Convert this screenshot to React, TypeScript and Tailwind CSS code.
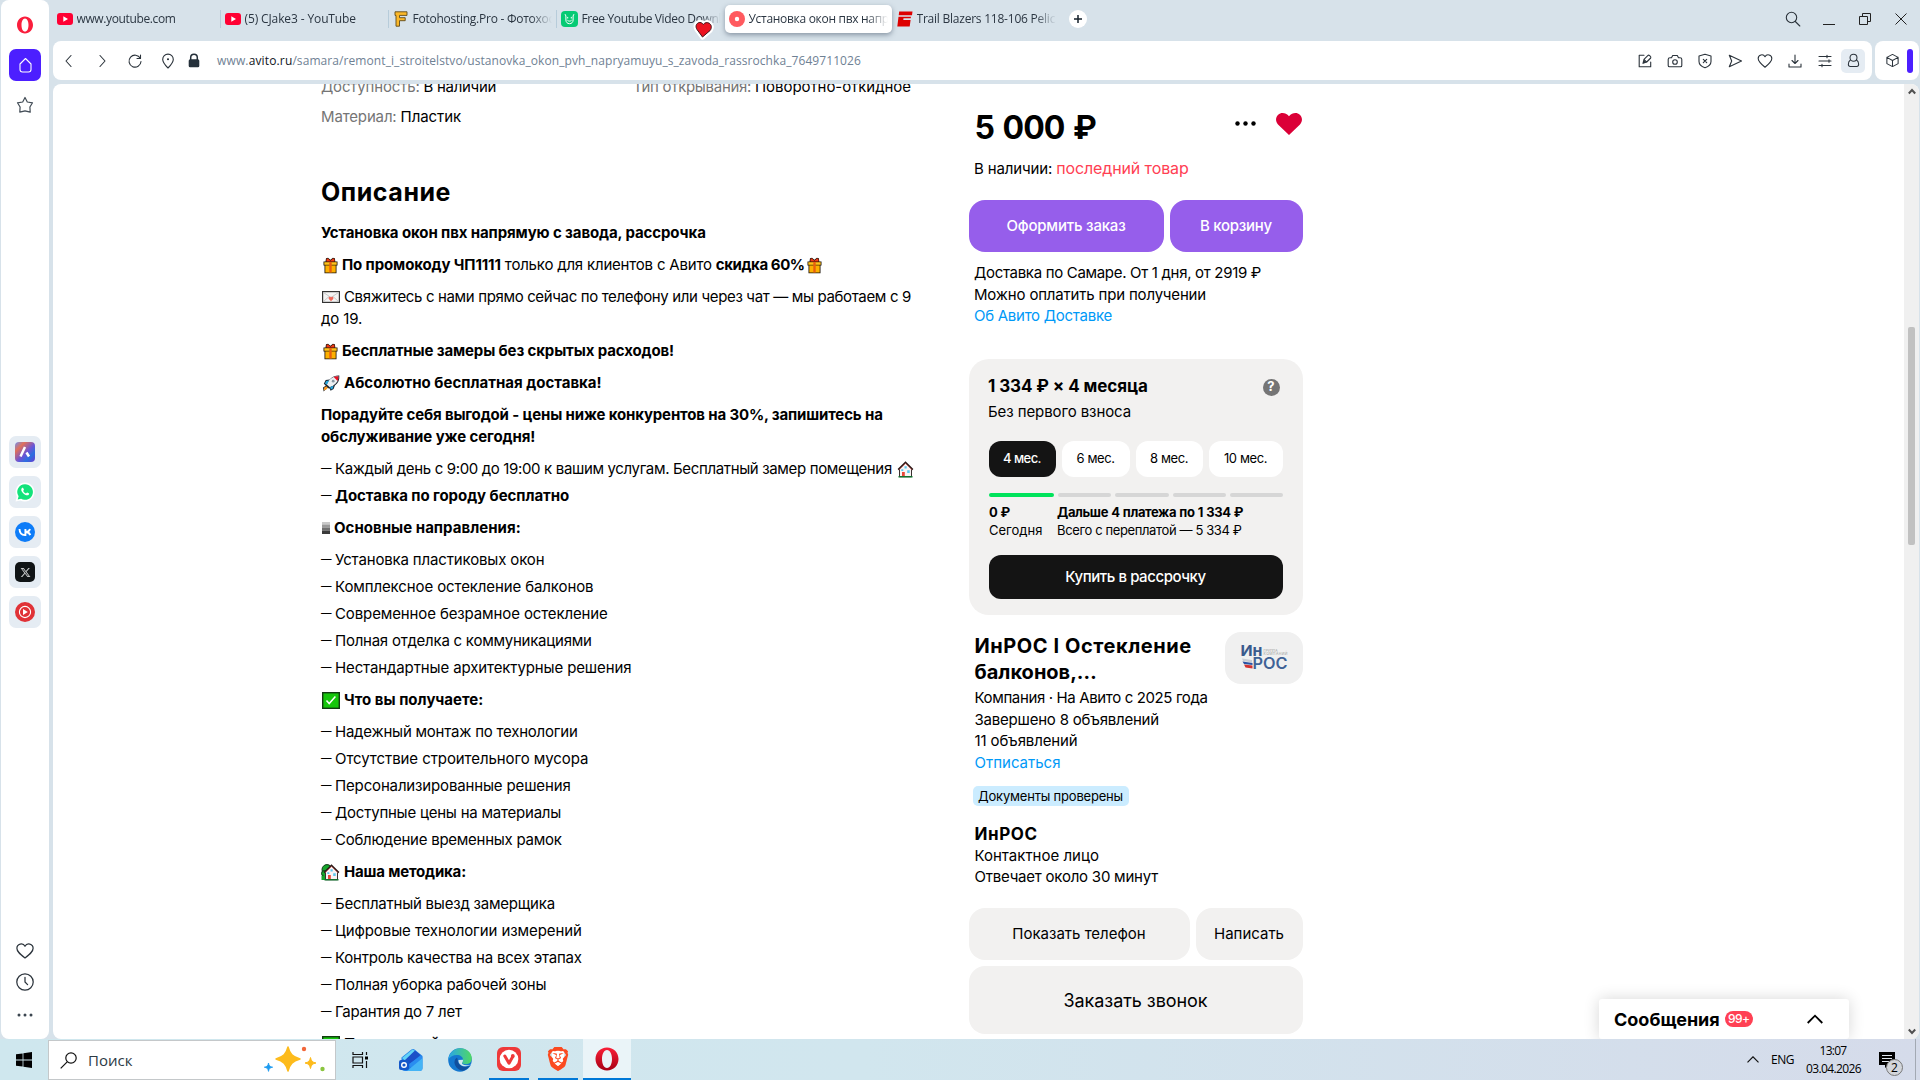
import React from 'react';
import { FaXTwitter } from 'react-icons/fa6';
import { SiBrave } from 'react-icons/si';

type IconProps = { className?: string };

/* ---------- emoji ---------- */

const GiftEmoji = () => (
  <svg className="ml-[2px] mr-[4px] h-[17px] w-[15px] shrink-0" viewBox="0 0 15 17">
    <path d="M3 1.200 5 .7l2.400 2 2.500-2 2 .5.4 3.300H14.500v4h-1V16.300h-12V8.500h-1v-4h2z" fill="#1c1208" />
    <path d="M1.300 5.200h12.400v2.600H1.300z" fill="#ffc21a" />
    <path d="M2.300 8.400h10.400v7.100H2.300z" fill="#fdb000" />
    <path d="M6.300 5h2.400v10.500H6.300z" fill="#e8600f" />
    <path d="M3.600 1.700 5 1.500l2.400 2.200L10 1.500l1.300.3.3 2.700H3.400z" fill="#f03a17" />
  </svg>
);

const EnvelopeEmoji = () => (
  <svg className="ml-px mr-[4px] h-[12px] w-[18px] shrink-0" viewBox="0 0 18 12">
    <rect x=".6" y=".6" width="16.8" height="10.800" fill="#f4f4f4" stroke="#333" strokeWidth="1.200" />
    <path d="m1.500 1.500 7.500 5 7.500-5M1.500 10.500l5.500-5M16.500 10.500 11 5.500" fill="none" stroke="#c8c8c8" />
    <path d="M9 10.300 6.800 7.900a1.400 1.400 0 0 1 2.200-1.700 1.400 1.400 0 0 1 2.200 1.700z" fill="#ee6a5c" />
  </svg>
);

const RocketEmoji = () => (
  <svg className="ml-px mr-[4px] h-[17px] w-[18px] shrink-0" viewBox="0 0 18 17">
    <path d="M17.300.4c.4 4.200-1 7.600-4.400 10.200L11.600 14l-3 1.800-1-2.400-2.300-.3-3.700 3.400L1 12.600l2.800-1.900-2-2 1.900-3.600 4-.6C10.300 1.500 13.500.2 17.300.4z" fill="#1b2430" />
    <path d="M16.400 1.300c.1 3.800-1.600 7-4.800 9l-3.800 2-3-2.800 1.800-3.800C9.200 2.600 12.600 1.300 16.400 1.300z" fill="#eceff2" />
    <path d="M16.400 1.300c-1.700-.1-3.300.2-4.700.8l3.900 3.800c.6-1.400.9-3 .8-4.600z" fill="#e81224" />
    <path d="M7.200 5.500 4.200 6 2.900 8.500l1.900 1.300zM11.500 10.700l-.7 2.700-1.900 1.100-.8-2.500z" fill="#2aa7de" />
    <circle cx="11.200" cy="6.200" r="1.400" fill="#8795a1" />
    <path d="m1.800 15.500.4-3 2.100-1.200 1.500 1.400-1.500 1.700z" fill="#ff9a1f" />
  </svg>
);

const HouseShape = () => (
  <>
    <path d="M8.500 1.500 14.500 7.500v8.200h-12V7.500z" fill="#f8f4f4" stroke="#3a3030" strokeWidth="1" />
    <path d="M1.200 8.700 8.500 1.500l7.300 7.200" fill="none" stroke="#2b1a18" strokeWidth="1.700" />
    <path d="M2 8.800 8.500 2.500l6.500 6.300" fill="none" stroke="#e0605a" strokeWidth=".6" />
    <path d="M7.500 5.200h2.200v2.300H7.500zM10.200 9.300h2.500v2.700h-2.500zM4.300 8.300h2v1.700h-2z" fill="#5cc8ee" />
    <path d="M5 11h2.800v4.500H5z" fill="#e8483a" />
    <path d="M1.500 15h14v1.500h-14z" fill="#12702e" />
  </>
);

const HouseEmoji = () => (
  <svg className="ml-[5px] h-[17px] w-[17px] shrink-0" viewBox="0 0 17 17">
    <HouseShape />
  </svg>
);

const GardenHouseEmoji = () => (
  <svg className="mr-[4px] h-[17px] w-[19px] shrink-0" viewBox="-2 0 19 17">
    <circle cx="4" cy="5.600" r="5" fill="#16a72c" stroke="#123b19" />
    <circle cx="1.500" cy="9.500" r="3" fill="#16a72c" stroke="#123b19" />
    <path d="M-1.500 12h4v4h-4z" fill="#16a72c" />
    <HouseShape />
  </svg>
);

const BarsEmoji = () => (
  <svg className="ml-px mr-[4px] h-[12px] w-[8px] shrink-0" viewBox="0 0 8 12">
    <path d="M0 0h8v2.500H0z" fill="#c9c9c9" />
    <path d="M0 2.500h8v3H0z" fill="#999" />
    <path d="M0 5.500h8v3H0z" fill="#6f6f6f" />
    <path d="M0 8.500h8V12H0z" fill="#3b3b3b" />
  </svg>
);

const CheckEmoji = () => (
  <svg className="ml-px mr-[4px] h-[17px] w-[18px] shrink-0" viewBox="0 0 18 17">
    <rect x=".7" y=".7" width="16.600" height="15.600" fill="#16c60c" stroke="#123b12" strokeWidth="1.400" />
    <path d="m4.500 8.600 2.700 3 6.200-7" fill="none" stroke="#fff" strokeWidth="1.500" />
  </svg>
);

/* ---------- browser icons ---------- */

const Stroke = ({ className = 'h-4 w-4', children }: React.PropsWithChildren<IconProps>) => (
  <svg className={className} viewBox="0 0 16 16" fill="none" stroke="#2b333b" strokeWidth="1.100" strokeLinecap="round" strokeLinejoin="round">
    {children}
  </svg>
);

const YoutubeIcon = () => (
  <svg className="h-[12px] w-4 shrink-0" viewBox="0 0 16 12">
    <rect width="16" height="12" rx="3" fill="#ff0033" />
    <path d="M6.300 3.300v5.400L11 6z" fill="#fff" />
  </svg>
);

const FotoIcon = () => (
  <svg className="ml-px mr-px h-4 w-[14px] shrink-0" viewBox="0 0 14 16">
    <path d="M1 .8h12v3.600H5.500v2.300h5.700v3H5.500v5.500H2V4.400H1z" fill="#fbb829" stroke="#5d4a1c" strokeWidth=".9" />
  </svg>
);

const CatIcon = () => (
  <svg className="h-4 w-[17px] shrink-0" viewBox="0 0 17 16">
    <rect width="17" height="16" rx="4" fill="#06ca74" />
    <path d="m4.200 3.500.7 1.500v4c0 2.200 1.500 3.700 3.600 3.700s3.600-1.500 3.600-3.700V5l.7-1.500M6.700 6.300v.8m3.600-.8v.8M6.700 9.500c1 .9 2.600.9 3.600 0" fill="none" stroke="#fff" strokeLinecap="round" />
  </svg>
);

const DotIcon = () => (
  <svg className="h-4 w-4 shrink-0" viewBox="0 0 16 16">
    <circle cx="8" cy="8" r="8" fill="#ff5a5f" />
    <circle cx="8" cy="8" r="2.200" fill="#fff" />
  </svg>
);

const EspnIcon = () => (
  <svg className="h-4 w-4 shrink-0" viewBox="0 0 16 16">
    <path d="M2.200.5h13.300L15 4.300H1.700zM1.500 5.700H14l-.3 1.500H6.500l-.2 1.900h7.300l-.9 6.400H.3z" fill="#d00" />
  </svg>
);

const tabs = [
  { icon: <YoutubeIcon />, title: 'www.youtube.com', track: 'tracking-[-0.031em]', sep: false },
  { icon: <YoutubeIcon />, title: '(5) CJake3 - YouTube', track: 'tracking-[-0.010em]', sep: true },
  { icon: <FotoIcon />, title: 'Fotohosting.Pro - Фотохостинг', track: 'tracking-[-0.021em]', sep: true },
  { icon: <CatIcon />, title: 'Free Youtube Video Downloader', track: 'tracking-[-0.029em]', sep: true },
  { icon: <DotIcon />, title: 'Установка окон пвх напрямую', track: 'tracking-[-0.025em]', active: true },
  { icon: <EspnIcon />, title: 'Trail Blazers 118-106 Pelicans', track: 'tracking-[-0.019em]', sep: false },
];

const TabBar = () => (
  <div className="flex h-[41px] text-[12px] text-[#2b3642]">
    {tabs.map((tab) => (
      <div
        key={tab.title}
        className={
          tab.active
            ? 'z-10 mt-[5px] ml-px flex h-7 w-[167px] items-center rounded-[5px] bg-white pl-1 shadow-[0_2px_5px_rgba(60,75,95,0.5)]'
            : tab.sep
              ? 'relative mt-[5px] flex h-7 w-[168px] items-center pl-[5px] before:absolute before:top-[5px] before:left-0 before:h-[18px] before:w-px before:bg-[#b7ccda]'
              : 'mt-[5px] flex h-7 w-[168px] items-center pl-[5px] first:w-[167px] first:pl-1'
        }
      >
        {tab.icon}
        <div className={`${tab.track} ml-[3.5px] w-[139px] overflow-hidden whitespace-nowrap [mask-image:linear-gradient(to_right,#000_118px,transparent)]`}>{tab.title}</div>
      </div>
    ))}
    <div className="mt-[10px] ml-[9px] flex h-[18px] w-[18px] items-center justify-center rounded-full bg-white">
      <svg className="h-2 w-2" viewBox="0 0 8 8"><path d="M4 0v8M0 4h8" stroke="#15202b" strokeWidth="1.500" /></svg>
    </div>
    <div className="mt-[11px] mr-3 ml-auto flex gap-6">
      <Stroke className="-mr-[2px] h-4 w-4"><circle cx="6.500" cy="6.500" r="5.200" /><path d="m10.300 10.500 4.500 4.500" /></Stroke>
      <svg className="mt-[2px] h-3 w-3" viewBox="0 0 12 12"><path d="M0 11.500h12" stroke="#222" /></svg>
      <svg className="mt-[2px] h-3 w-3" viewBox="0 0 12 12"><path d="M.5 3.500h8v8h-8zM3.500 3.500v-3h8v8h-3" fill="none" stroke="#222" /></svg>
      <svg className="mt-[2px] h-3 w-3" viewBox="0 0 12 12"><path d="m.5.500 11 11m0-11-11 11" stroke="#222" /></svg>
    </div>
  </div>
);

const AddressBar = () => (
  <div className="flex gap-[3px]">
    <div className="flex h-[39px] w-[1819px] items-center rounded-[8px] bg-white pr-[7px] pl-2">
      <Stroke><path d="M10 2.500 5 8l5 5.500" /></Stroke>
      <Stroke className="ml-[17px] h-4 w-4"><path d="m6 2.500 5 5.500-5 5.500" /></Stroke>
      <Stroke className="ml-[17px] h-4 w-4"><path d="M13.300 5.300A6 6 0 1 0 14 8.500M13.500 2v3.500H10" /></Stroke>
      <Stroke className="ml-[17px] h-4 w-4"><path d="M8 15c-3.500-3.600-5.300-6.300-5.300-8.600a5.300 5.300 0 0 1 10.600 0C13.300 8.700 11.500 11.400 8 15z" /><circle cx="8" cy="6.300" r=".5" fill="#2b333b" /></Stroke>
      <svg className="ml-[12px] h-4 w-3" viewBox="0 0 12 16"><path d="M2.700 7V4.600a3.300 3.300 0 0 1 6.600 0V7" fill="none" stroke="#25303a" strokeWidth="1.500" /><rect x=".7" y="6.300" width="10.600" height="8" rx="1.500" fill="#25303a" /></svg>
      <div className="mt-px ml-[17px] text-[12px] whitespace-nowrap text-[#6f8194]">
        <span className="tracking-[0.012em]">www.</span>
        <span className="tracking-[0.012em] text-[#10161c]">avito.ru</span>
        <span className="tracking-[0.0065em]">/samara/remont_i_stroitelstvo/ustanovka_okon_pvh_napryamuyu_s_zavoda_rassrochka_7649711026</span>
      </div>
      <div className="ml-auto flex items-center gap-[14px]">
        <Stroke><path d="M7 2.300H2.200v11.500h11.500V9M6 10.300l1-4 4-4c.8-.8 3.500 1.700 2.700 2.700l-4 4zM7 6.500l2.600 2.700M6 10.300l2.300-2.400" /></Stroke>
        <Stroke><path d="M1.200 12.500v-6C1.200 5.200 2 4.700 3 4.700h1.500L5.700 2.500h4.600l1.200 2.200H13c1 0 1.800.5 1.800 1.800v6c0 .8-.5 1.300-1.300 1.300h-11c-.8 0-1.300-.5-1.300-1.300z" /><circle cx="8" cy="9" r="2.300" /></Stroke>
        <Stroke><path d="M8 1.300 14 3v5.500c0 3-2.500 5-6 6.300-3.500-1.300-6-3.300-6-6.300V3zM6.300 6.300l3.400 3.400m0-3.400L6.300 9.700" /></Stroke>
        <Stroke><path d="m2.300 2.300 12.200 5.700-12.200 5.700L4.700 8z" /></Stroke>
        <Stroke><path d="M8 14.200C3.500 10.600 1.200 8.500 1.200 5.500a3.600 3.600 0 0 1 6.800-1.700 3.600 3.600 0 0 1 6.800 1.700c0 3-2.300 5.100-6.800 8.700z" /></Stroke>
        <Stroke><path d="M8 2v8.500m-3-3 3 3 3-3M2 11v3h12v-3" /></Stroke>
        <Stroke><path d="M2 3.500h12M2 8h12M2 12.500h12M10 2.200v2.600M12 6.700v2.600M5 11.200v2.600" /></Stroke>
        <div className="-ml-1.5 flex h-6 w-6 items-center justify-center rounded-[5px] bg-[#e5ecf3]">
          <Stroke className="h-[15px] w-[15px]"><circle cx="8" cy="5" r="3.700" /><path d="M4.700 7.500C3.300 8.500 2.500 10 2.500 12c0 1.500.8 2.300 2 2.300h7c1.200 0 2-.8 2-2.300 0-2-.8-3.500-2.200-4.500" /></Stroke>
        </div>
      </div>
    </div>
    <div className="flex h-[39px] flex-1 items-center justify-between rounded-[8px] bg-white pr-1.5 pl-[10px]">
      <Stroke className="h-[15px] w-[15px]"><path d="M8 1.500 14 4.700v6.600L8 14.500l-6-3.200V4.700zM2 4.700 8 8l6-3.300M8 8v6.500" /></Stroke>
      <div className="h-6 w-[6px] rounded-full bg-[#4c1fff]" />
    </div>
  </div>
);

/* ---------- opera sidebar ---------- */

const Tile = ({ children }: React.PropsWithChildren) => (
  <div className="flex h-8 w-8 items-center justify-center rounded-[7px] bg-[#e5ecf3]">{children}</div>
);

const Sidebar = () => (
  <div className="ml-px flex w-12 flex-col items-center rounded-[8px] bg-white">
    <svg className="mt-[16px] h-[18px] w-[18px]" viewBox="0 0 18 18"><path fillRule="evenodd" d="M9 .5c4.500 0 8 3.800 8 8.500s-3.500 8.500-8 8.500S1 13.700 1 9 4.500.5 9 .5zm0 1.900c-2.200 0-3.500 3-3.500 6.600s1.300 6.600 3.500 6.600 3.500-3 3.500-6.600S11.200 2.400 9 2.400z" fill="#fa1e3c" /></svg>
    <div className="mt-[15px] flex h-8 w-8 items-center justify-center rounded-[7px] bg-[#4c1fff]">
      <svg className="h-[17px] w-[17px]" viewBox="0 0 17 17"><path d="M8.500 1.500 14 7v5.500a2.500 2.500 0 0 1-2.500 2.500h-6A2.500 2.500 0 0 1 3 12.500V7z" fill="none" stroke="#fff" strokeWidth="1.100" strokeLinejoin="round" /></svg>
    </div>
    <svg className="mt-[15px] h-[18px] w-[18px]" viewBox="0 0 18 18"><path d="M9 1.500 11.300 6l5.200.8-2.600 4.200.3 5.200L9 14.800l-5.200 1.400.3-5.200L1.500 6.800 6.700 6z" fill="none" stroke="#414b55" strokeWidth="1.200" strokeLinejoin="round" /></svg>
    <div className="mt-[322px] flex flex-col gap-2">
      <Tile>
        <div className="flex h-5 w-5 items-center justify-center rounded-[4px] bg-[linear-gradient(135deg,#6f8ff0_0%,#e0705a_25%,#6b55d6_55%,#2b6fe0_75%,#6a3bd0_100%)]">
          <svg className="h-3 w-3" viewBox="0 0 12 12"><path d="M6 1 1.500 10.500M7.500 6.500l2.500 4" stroke="#fff" strokeWidth="2.500" /></svg>
        </div>
      </Tile>
      <Tile>
        <svg className="h-5 w-5" viewBox="0 0 20 20">
          <path d="M10 .5a9.500 9.500 0 1 1-4.500 17.900L.5 19.500l1.300-4.800A9.500 9.500 0 0 1 10 .5z" fill="#fff" />
          <path d="M10 2.200a7.800 7.800 0 1 1-3.900 14.500l-3.400.9.900-3.300A7.800 7.800 0 0 1 10 2.200z" fill="#12e37b" />
          <path d="M7.200 5.800c.4-.2.900-.1 1.100.4l.6 1.400c.2.400-.6 1.100-.7 1.400.5 1.100 1.500 2 2.700 2.500.4 0 .9-1.100 1.300-1l1.600.8c.5.300.4 1-.1 1.500-2.100 2.200-8.500-2.800-7.300-5.800.2-.5.500-1 .8-1.200z" fill="#fff" />
        </svg>
      </Tile>
      <Tile>
        <svg className="h-5 w-5" viewBox="0 0 20 20"><circle cx="10" cy="10" r="10" fill="#0d7cf8" /><path d="M4.500 7c.2 3.800 2 6.100 5.300 6.100h.6V7M15 7c-.5 1.800-2 3-4.300 3 2.400.2 3.900 1.200 4.600 3.100" fill="none" stroke="#fff" strokeWidth="1.900" /></svg>
      </Tile>
      <Tile><div className="flex h-5 w-5 items-center justify-center rounded-[5px] bg-[#101416]"><FaXTwitter className="h-[11px] w-[11px] text-[#c4c6c7]" /></div></Tile>
      <Tile>
        <svg className="h-5 w-5" viewBox="0 0 20 20"><circle cx="10" cy="10" r="10" fill="#e03237" /><circle cx="10" cy="10" r="5.600" fill="none" stroke="#fff" strokeWidth="1.100" /><path d="M8 7v6l4.800-3z" fill="#fff" /></svg>
      </Tile>
    </div>
    <div className="mt-[314px] flex flex-col items-center">
      <Stroke className="h-[18px] w-[18px]"><path d="M8 14.200C3.500 10.600.8 8.500.8 5.500a3.800 3.800 0 0 1 7.200-1.700 3.800 3.800 0 0 1 7.200 1.700c0 3-2.700 5.100-7.200 8.700z" /></Stroke>
      <Stroke className="mt-[13px] h-[18px] w-[18px]"><circle cx="8" cy="8" r="7.300" /><path d="M8 3.800V8l2.300 2.300" /></Stroke>
      <svg className="mt-[22px] h-1 w-4" viewBox="0 0 16 4" fill="#3c4650"><circle cx="2" cy="2" r="1.500" /><circle cx="8" cy="2" r="1.500" /><circle cx="14" cy="2" r="1.500" /></svg>
    </div>
  </div>
);

/* ---------- listing ---------- */

const Line = ({ children }: React.PropsWithChildren) => (
  <div className="flex h-[22px] items-center whitespace-pre">{children}</div>
);

const Dash = () => <span className="w-[14px] shrink-0 text-[10.500px] font-medium">—</span>;

const lists = {
  directions: [
    ['Установка пластиковых окон', 'tracking-[-0.010em]'],
    ['Комплексное остекление балконов', 'tracking-[-0.007em]'],
    ['Современное безрамное остекление', 'tracking-[-0.008em]'],
    ['Полная отделка с коммуникациями', 'tracking-[-0.016em]'],
    ['Нестандартные архитектурные решения', 'tracking-[-0.008em]'],
  ],
  benefits: [
    ['Надежный монтаж по технологии', 'tracking-[-0.015em]'],
    ['Отсутствие строительного мусора', 'tracking-[-0.005em]'],
    ['Персонализированные решения', 'tracking-[-0.010em]'],
    ['Доступные цены на материалы', 'tracking-[-0.015em]'],
    ['Соблюдение временных рамок', 'tracking-[-0.017em]'],
  ],
  method: [
    ['Бесплатный выезд замерщика', 'tracking-[-0.015em]'],
    ['Цифровые технологии измерений', 'tracking-[-0.006em]'],
    ['Контроль качества на всех этапах', 'tracking-[-0.014em]'],
    ['Полная уборка рабочей зоны', 'tracking-[-0.016em]'],
    ['Гарантия до 7 лет', 'tracking-[-0.017em]'],
  ],
};

const List = ({ items }: { items: string[][] }) => (
  <div className="flex flex-col gap-[5px]">
    {items.map(([text, track]) => (
      <Line key={text}><Dash /><span className={track}>{text}</span></Line>
    ))}
  </div>
);

const Description = () => (
  <div className="w-[648px] shrink-0">
    <div className="-mt-2 flex h-[22px] items-center">
      <div className="w-[312px]"><span className="tracking-[-0.012em] text-[#757575]">Доступность: </span><span className="tracking-[-0.02em]">В наличии</span></div>
      <div><span className="tracking-[-0.02em] text-[#757575]">Тип открывания: </span><span className="tracking-[-0.004em]">Поворотно-откидное</span></div>
    </div>
    <div className="mt-2 flex h-[22px] items-center whitespace-pre"><span className="tracking-[-0.010em] text-[#757575]">Материал: </span><span className="tracking-[-0.006em]">Пластик</span></div>
    <h2 className="mt-[49px] text-[25px] leading-[30px] font-bold tracking-[0.022em]">Описание</h2>
    <div className="mt-[15px] flex flex-col gap-[10px]">
      <Line><b className="tracking-[-0.007em]">Установка окон пвх напрямую с завода, рассрочка</b></Line>
      <Line>
        <GiftEmoji />
        <b className="tracking-[-0.008em]">По промокоду ЧП1111</b>
        <span className="tracking-[-0.0130em]"> только для клиентов с Авито </span>
        <b className="tracking-[-0.028em]">скидка 60%</b>
        <GiftEmoji />
      </Line>
      <div>
        <Line><EnvelopeEmoji /><span className="tracking-[-0.0234em]">Свяжитесь с нами прямо сейчас по телефону или через чат — мы работаем с 9</span></Line>
        <Line><span className="tracking-[-0.01em]">до 19.</span></Line>
      </div>
      <Line><GiftEmoji /><b className="tracking-[-0.0084em]">Бесплатные замеры без скрытых расходов!</b></Line>
      <Line><RocketEmoji /><b>Абсолютно бесплатная доставка!</b></Line>
      <div>
        <Line><b className="tracking-[-0.0095em]">Порадуйте себя выгодой - цены ниже конкурентов на 30%, запишитесь на</b></Line>
        <Line><b className="tracking-[-0.006em]">обслуживание уже сегодня!</b></Line>
      </div>
      <div className="flex flex-col gap-[5px]">
        <Line><Dash /><span className="tracking-[-0.0233em]">Каждый день с 9:00 до 19:00 к вашим услугам. Бесплатный замер помещения</span><HouseEmoji /></Line>
        <Line><Dash /><b className="tracking-[-0.004em]">Доставка по городу бесплатно</b></Line>
      </div>
      <Line><BarsEmoji /><b className="tracking-[0.002em]">Основные направления:</b></Line>
      <List items={lists.directions} />
      <Line><CheckEmoji /><b>Что вы получаете:</b></Line>
      <List items={lists.benefits} />
      <Line><GardenHouseEmoji /><b className="tracking-[-0.012em]">Наша методика:</b></Line>
      <List items={lists.method} />
      <Line><CheckEmoji /><b>Прозрачный</b></Line>
    </div>
  </div>
);

const Installments = () => (
  <div className="mt-8 h-64 rounded-[20px] bg-[#f2f1f0] px-5 pt-[17px] text-[13px]">
    <div className="flex h-[22px] items-center justify-between">
      <b className="-ml-px text-[17px] tracking-[-0.005em]">1 334 ₽ × 4 месяца</b>
      <div className="mr-[3.5px] flex h-[17px] w-[17px] items-center justify-center rounded-full bg-[#757575] text-[13px] font-bold text-white">?</div>
    </div>
    <div className="mt-[3px] -ml-px text-[15px] leading-[22px] tracking-[-0.006em]">Без первого взноса</div>
    <div className="mt-[18px] flex h-9 justify-between text-center leading-[35px]">
      <div className="w-[67px] rounded-[12px] bg-[#141414] pr-px font-medium tracking-[-0.042em] text-white">4 мес.</div>
      <div className="w-[68px] rounded-[12px] bg-white pr-px tracking-[-0.032em]">6 мес.</div>
      <div className="w-[67px] rounded-[12px] bg-white pr-px tracking-[-0.032em]">8 мес.</div>
      <div className="w-[74px] rounded-[12px] bg-white pr-px tracking-[-0.032em]">10 мес.</div>
    </div>
    <div className="mt-4 flex h-1 gap-1">
      <div className="w-[65px] rounded-[2px] bg-[#00e35b]" />
      <div className="flex-1 rounded-[2px] bg-[#d6d6d6]" />
      <div className="flex-1 rounded-[2px] bg-[#d6d6d6]" />
      <div className="flex-1 rounded-[2px] bg-[#d6d6d6]" />
      <div className="flex-1 rounded-[2px] bg-[#d6d6d6]" />
    </div>
    <div className="mt-[6px] flex leading-[18px]">
      <div className="w-[68px]">
        <b className="block tracking-[-0.012em]">0 ₽</b>
        <div>Сегодня</div>
      </div>
      <div>
        <b className="block tracking-[-0.0290em] [word-spacing:0.500px]">Дальше 4 платежа по 1 334 ₽</b>
        <div className="tracking-[-0.0290em]">Всего с переплатой — 5 334 ₽</div>
      </div>
    </div>
    <div className="mt-4 rounded-[12px] bg-[#141414] pr-px text-center text-[15px] leading-[44px] font-medium tracking-[-0.029em] text-white">Купить в рассрочку</div>
  </div>
);

const SellerLogo = () => (
  <div className="flex h-[52px] w-[78px] shrink-0 items-center justify-center rounded-[16px] bg-[#f0f0f0]">
    <svg className="h-[30px] w-[50px]" viewBox="0 0 50 30">
      <text x="1.500" y="13" fontFamily="Inter" fontSize="15" fontWeight="700" fill="#3a5a8c" textLength="22" lengthAdjust="spacingAndGlyphs">Ин</text>
      <text x="24.500" y="8.500" fontFamily="Inter" fontSize="3.500" fill="#9a9a9a">ГРУППА</text>
      <text x="24.500" y="12" fontFamily="Inter" fontSize="3.500" fill="#9a9a9a" textLength="24">КОМПАНИЙ</text>
      <text x="13.500" y="26" fontFamily="Inter" fontSize="15.500" fontWeight="600" fill="#3f6296" textLength="35" lengthAdjust="spacingAndGlyphs">РОС</text>
      <path d="M3 15.500 13 17v2.500L4 18z" fill="#c9ced6" />
      <path d="M3.500 18.500 13.500 20v2L5 21z" fill="#2b54a4" />
      <path d="M5 21.500 13.500 22.500V25.500L6.500 24.500z" fill="#d2322f" />
    </svg>
  </div>
);

const Seller = () => (
  <div className="mt-[17px]">
    <div className="flex h-[54px] items-start justify-between pl-[5.5px]">
      <b className="pt-px text-[20px] leading-[26px] whitespace-nowrap">
        <span className="block tracking-[0.028em]">ИнРОС I Остекление</span>
        <span className="block">балконов,…</span>
      </b>
      <SellerLogo />
    </div>
    <div className="mt-px pl-[5.5px] leading-[21.670px]">
      <div className="tracking-[-0.0246em]">Компания · На Авито с 2025 года</div>
      <div className="tracking-[-0.014em]">Завершено 8 объявлений</div>
      <div className="tracking-[-0.009em]">11 объявлений</div>
      <div className="text-[#0099f7]">Отписаться</div>
    </div>
    <div className="mt-3 ml-1 h-5 w-[156px] rounded-[5px] bg-[#cbecff] pl-[5px] text-[13px] leading-[20px] tracking-[-0.015em] whitespace-nowrap">Документы проверены</div>
    <div className="mt-[17px] h-[65px] pl-[5.5px] leading-[21.500px]">
      <b className="block text-[17px] leading-[22px] tracking-[0.035em]">ИнРОС</b>
      <div>Контактное лицо</div>
      <div className="tracking-[-0.015em]">Отвечает около 30 минут</div>
    </div>
    <div className="mt-[20px] flex gap-1.5 text-center leading-[51px]">
      <div className="h-[52px] w-[221px] rounded-[16px] bg-[#f2f1f0] pr-px">Показать телефон</div>
      <div className="h-[52px] flex-1 rounded-[16px] bg-[#f2f1f0] pr-px">Написать</div>
    </div>
    <div className="mt-1.5 h-[68px] rounded-[16px] bg-[#f2f1f0] pr-px text-center text-[18px] leading-[69px] tracking-[-0.003em]">Заказать звонок</div>
  </div>
);

const Purchase = () => (
  <div className="w-[334px] shrink-0">
    <div className="mt-6 flex h-10 items-center pl-[5.5px]">
      <b className="text-[32px] tracking-[-0.0300em] [word-spacing:2px]">5 000 ₽</b>
      <svg className="mb-[9px] ml-auto h-[5px] w-[21px]" viewBox="0 0 21 5"><circle cx="2.500" cy="2.500" r="2.200" /><circle cx="10.500" cy="2.500" r="2.200" /><circle cx="18.500" cy="2.500" r="2.200" /></svg>
      <svg className="mr-px mb-[9px] ml-[20px] h-[22px] w-[26px]" viewBox="0 0 26 22"><path d="M13 22 2 11.500C-.8 8.500-.5 4 2.200 1.700 5-.8 9.800-.5 13 3.200 16.200-.5 21-.8 23.800 1.700 26.500 4 26.800 8.500 24 11.500z" fill="#db0037" /></svg>
    </div>
    <div className="mt-[10px] flex h-[22px] items-center pl-[5px] whitespace-pre"><span className="tracking-[-0.01em]">В наличии: </span><span className="mb-[2px] text-[16px] tracking-[-0.007em] text-[#ff4053]">последний товар</span></div>
    <div className="mt-5 flex gap-1.5 text-center leading-[51px] font-medium text-white">
      <div className="h-[52px] w-[195px] rounded-[16px] bg-[#965eeb] pr-px tracking-[-0.0134em]">Оформить заказ</div>
      <div className="h-[52px] flex-1 rounded-[16px] bg-[#965eeb] pr-px tracking-[-0.0177em]">В корзину</div>
    </div>
    <div className="mt-[10px] h-[65px] pl-[5px] leading-[21.500px]">
      <div className="tracking-[-0.021em]">Доставка по Самаре. От 1 дня, от 2919 ₽</div>
      <div className="tracking-[-0.0117em]">Можно оплатить при получении</div>
      <div className="tracking-[-0.0180em] text-[#0099f7]">Об Авито Доставке</div>
    </div>
    <Installments />
    <Seller />
  </div>
);

const Messages = () => (
  <div className="absolute right-[70px] bottom-0 flex h-10 w-[250px] items-center rounded-[3px] bg-white pr-[26px] pl-[15px] shadow-[0_0_16px_rgba(0,0,0,0.16)]">
    <b className="text-[18px]">Сообщения</b>
    <div className="ml-[5px] h-4 w-7 rounded-full bg-[#ff4053] text-center text-[12px] leading-[16px] font-medium tracking-[-0.05em] text-white">99+</div>
    <svg className="ml-auto h-[10px] w-4" viewBox="0 0 16 10"><path d="m.7 9 7.300-7.300L15.300 9" fill="none" stroke="#000" strokeWidth="1.800" /></svg>
  </div>
);

const Scrollbar = () => (
  <div className="ml-auto flex w-[15px] flex-col items-center bg-[#f0f0f0]">
    <svg className="mt-1 h-[7px] w-2" viewBox="0 0 8 7"><path d="m.8 5.500 3.200-3.500 3.200 3.500" fill="none" stroke="#505050" strokeWidth="2" /></svg>
    <div className="mt-[232px] h-[218px] w-[7px] rounded-[2px] bg-[#c1c1c1]" />
    <svg className="mt-auto mb-1 h-[7px] w-2" viewBox="0 0 8 7"><path d="m.8 1.500 3.200 3.500 3.200-3.500" fill="none" stroke="#505050" strokeWidth="2" /></svg>
  </div>
);

const Page = () => (
  <div className="relative mt-1 flex h-[955px] overflow-hidden rounded-[8px] bg-white pl-[268px] font-['Inter',sans-serif] text-[15px] text-black">
    <Description />
    <Purchase />
    <Scrollbar />
    <Messages />
  </div>
);

/* ---------- taskbar ---------- */

const OutlookIcon = () => (
  <svg className="h-6 w-6" viewBox="0 0 24 24">
    <path d="M2.500 9.500 12.500 1.500a2.500 2.500 0 0 1 3 0L23.500 8v12a3 3 0 0 1-3 3H6a3.500 3.500 0 0 1-3.500-3.500z" fill="#1f7fe8" />
    <path d="M3 10 13.500 1.500l3 1.500L6 12.500z" fill="#62d3f7" />
    <path d="M5 13 16 2.500l5.500 4.500L9 18z" fill="#1b4fc8" />
    <path d="m10 16 12-8.500 1.500 2.500L12 20z" fill="#2a8df0" />
    <path d="M23.500 10v10a3 3 0 0 1-3 3H8z" fill="#45b4f5" />
    <rect x="0" y="12" width="10" height="10" rx="2" fill="#1458c9" />
    <circle cx="5" cy="17" r="2.300" fill="none" stroke="#fff" strokeWidth="1.400" />
  </svg>
);

const EdgeIcon = () => (
  <svg className="h-6 w-6" viewBox="0 0 24 24">
    <defs>
      <linearGradient id="edgeTop" x1="0" x2="1"><stop offset="0" stopColor="#2aa5e8" /><stop offset="1" stopColor="#4fd964" /></linearGradient>
    </defs>
    <circle cx="12" cy="12" r="11.800" fill="#1478d0" />
    <path d="M.3 11.500C1 5 6 .2 12.200.2 19 .2 23.800 5 23.800 10.500c0 3.500-2.700 5.700-5.700 5.700-2.500 0-4-.8-4-1.700 0-.7.900-1.200.9-2.900 0-2.600-2.500-4.700-6-4.700-4 0-7 2-8.700 4.600z" fill="url(#edgeTop)" />
    <path d="M9 9.500C6.500 11 5.800 14 7 17c1.300 3.500 4.500 5.500 8 5.800 3-.8 5.500-2.800 7-5.300-4.500 2.500-10.500 1-11.800-3-.5-1.800-.3-3.500-1.200-5z" fill="#104f9e" />
    <path d="M10.500 12c-.5 4 3.500 6.500 7.500 6.200 1.500-.1 3-.5 4-1.100.8-.6 1.500.2 1 1l-.8 1.200c2-3 1.600-3.100 1.600-3.100-1.500.9-3.500 1.300-5.500 1.100-3-.3-4.700-1.400-4.200-2.500.8-1.100.9-2 .9-3z" fill="#d0e8ef" />
  </svg>
);

const VivaldiIcon = () => (
  <svg className="h-6 w-6" viewBox="0 0 24 24">
    <rect width="24" height="24" rx="6" fill="#ef3939" />
    <circle cx="12" cy="12" r="9.300" fill="#fff" />
    <path d="m7.800 9 4.200 7.200L15.800 9.500" fill="none" stroke="#ef3939" strokeWidth="3" strokeLinecap="round" strokeLinejoin="round" />
    <circle cx="15.800" cy="9" r="1.900" fill="#ef3939" />
  </svg>
);

const BraveIcon = () => (
  <div className="relative h-6 w-6">
    <div className="absolute top-[4px] left-[6px] h-[15px] w-3 rounded-b-[6px] bg-white" />
    <SiBrave className="relative h-6 w-6 text-[#fb4a20]" />
  </div>
);

const OperaIcon = () => (
  <svg className="h-6 w-6" viewBox="0 0 24 24">
    <defs><linearGradient id="op" x2="0" y2="1"><stop offset="0" stopColor="#fa2038" /><stop offset="1" stopColor="#a70014" /></linearGradient></defs>
    <path fillRule="evenodd" d="M12 .5c6.500 0 11.500 5 11.500 11.500S18.500 23.500 12 23.500.5 18.500.5 12 5.500.5 12 .5zm0 2.500c-3 0-5 4-5 9s2 9 5 9 5-4 5-9-2-9-5-9z" fill="url(#op)" />
  </svg>
);

const Taskbar = () => (
  <div className="flex h-[41px] bg-[linear-gradient(90deg,#cfe7ee_0%,#d1e6ee_45%,#d5dbea_100%)] font-['Open_Sans',sans-serif] text-[12px] text-black">
    <svg className="mt-[13px] ml-4 h-4 w-4" viewBox="0 0 16 16"><path d="m0 2.300 6.600-.9v6.200H0zM7.400 1.300 16 0v7.600H7.400zM0 8.400h6.600v6.200L0 13.700zM7.400 8.400H16V16l-8.600-1.300z" /></svg>
    <div className="mt-px ml-4 flex h-10 w-72 items-center border border-[#c4c8ca] bg-white">
      <svg className="ml-[11px] h-[17px] w-[17px]" viewBox="0 0 17 17"><circle cx="11" cy="6" r="5.200" fill="none" stroke="#111" strokeWidth="1.200" /><path d="m7.200 9.800-6.500 6.500" stroke="#111" strokeWidth="1.200" /></svg>
      <span className="ml-[11px] text-[15px] text-[#2d3a45]">Поиск</span>
      <svg className="mt-[-2px] mr-[9px] ml-auto h-[26px] w-[62px]" viewBox="0 0 62 26">
        <path d="M24 1c1.800 7 4.500 10 12 12-7.500 2-10.200 5-12 12-1.800-7-4.500-10-12-12 7.500-2 10.200-5 12-12z" fill="#fdbb1c" stroke="#fdbb1c" strokeWidth="1.500" strokeLinejoin="round" />
        <path d="M46.500 11.500c.8 3.700 1.800 4.700 5.500 5.500-3.700.8-4.700 1.800-5.500 5.500-.8-3.700-1.800-4.700-5.500-5.500 3.700-.8 4.700-1.800 5.500-5.500z" fill="#fdbb1c" stroke="#fdbb1c" strokeLinejoin="round" />
        <path d="M4.500 17c.6 2.900 1.300 3.600 4.200 4.200-2.900.6-3.600 1.300-4.200 4.200-.6-2.900-1.300-3.600-4.200-4.200 2.900-.6 3.600-1.300 4.200-4.200z" fill="#1d9bf0" stroke="#1d9bf0" strokeWidth=".8" />
        <circle cx="40" cy="3" r="2.200" fill="#f2673a" />
        <circle cx="58.500" cy="23" r="2.200" fill="#8ac53f" />
      </svg>
    </div>
    <svg className="mt-[13px] ml-4 h-4 w-[17px]" viewBox="0 0 17 16"><path d="M1 0v2.500h9.500V0M1 16v-2.500h9.500V16M1 5h9.500v6H1zM14.500 0v3M14.500 9v7" fill="none" stroke="#111" strokeWidth="1.200" /><path d="M13 4.500h3v3h-3z" /></svg>
    <div className="ml-[17px] flex">
      <div className="flex h-[41px] w-[49px] items-center justify-center"><OutlookIcon /></div>
      <div className="flex h-[41px] w-[49px] items-center justify-center"><EdgeIcon /></div>
      <div className="mr-[9px] ml-[5px] flex h-[41px] w-10 items-center justify-center border-b-2 border-[#0078d7]"><VivaldiIcon /></div>
      <div className="mr-[5px] flex h-[41px] w-10 items-center justify-center border-b-2 border-[#0078d7]"><BraveIcon /></div>
      <div className="flex h-[41px] w-12 items-center justify-center border-b-2 border-[#0078d7] bg-[#eaf4f8]"><OperaIcon /></div>
    </div>
    <div className="ml-auto flex">
      <svg className="mt-[17px] h-[7px] w-3" viewBox="0 0 12 7"><path d="m.5 6.300 5.500-5.500 5.500 5.500" fill="none" stroke="#111" strokeWidth="1.200" /></svg>
      <span className="ml-3 leading-[41px] tracking-[-0.04em]">ENG</span>
      <div className="mt-[3px] ml-[12px] w-[54px] text-center leading-[18px] whitespace-nowrap">
        <div className="tracking-[-0.06em]">13:07</div>
        <div className="tracking-[-0.052em]">03.04.2026</div>
      </div>
      <div className="relative mt-[13px] ml-[19px] h-7 w-[26px]">
        <svg className="h-4 w-4" viewBox="0 0 16 16"><path d="M0 0h16v13H9.500L6 16v-3H0z" /><path d="M3 3.500h10M3 6.500h10M3 9.500h7" stroke="#dfe6ee" strokeWidth="1.100" /></svg>
        <div className="absolute top-[7px] left-[7px] h-[17px] w-[17px] rounded-full border border-[#777] bg-[#d3d6db] text-center text-[12px] leading-[15px]">2</div>
      </div>
      <div className="ml-2.5 w-[5px] border-l border-[#a3a9b3]" />
    </div>
  </div>
);

const HeartCursor = () => (
  <svg className="absolute top-[19px] left-[693px] z-20 h-[21px] w-[22px]" viewBox="0 0 22 21">
    <path d="M9.500 18 4 10.500C2.300 7.800 3 5 5.300 3.800c2.200-1 4 .2 5 1.700 1.500-2 4-2.500 6-1.200 2.300 1.500 2.700 4.500.9 7.100z" fill="#fff" stroke="#fff" strokeWidth="5" strokeLinejoin="round" />
    <path d="M9.500 18 4 10.500C2.300 7.800 3 5 5.300 3.800c2.200-1 4 .2 5 1.700 1.500-2 4-2.500 6-1.200 2.300 1.500 2.700 4.500.9 7.100z" fill="#ec1320" stroke="#41151a" strokeWidth="1" />
  </svg>
);

function App() {
  return (
    <div className="relative h-[1080px] w-[1920px] overflow-hidden bg-[#d7e2ea] font-['Open_Sans',sans-serif]">
      <div className="flex h-[1039px]">
        <Sidebar />
        <div className="ml-1 flex w-[1866px] flex-col">
          <TabBar />
          <AddressBar />
          <Page />
        </div>
      </div>
      <Taskbar />
      <HeartCursor />
    </div>
  );
}

export default App;
